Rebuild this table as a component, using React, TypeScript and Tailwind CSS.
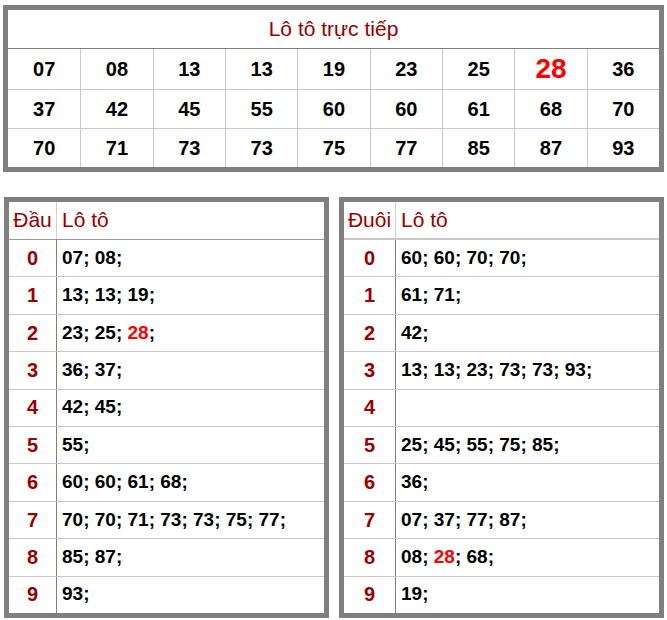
import React from 'react';

// Kết quả lô tô
const numbers = [
  ['07', '08', '13', '13', '19', '23', '25', '28', '36'],
  ['37', '42', '45', '55', '60', '60', '61', '68', '70'],
  ['70', '71', '73', '73', '75', '77', '85', '87', '93'],
];

const special = '28';

const dau = [
  ['07', '08'],
  ['13', '13', '19'],
  ['23', '25', '28'],
  ['36', '37'],
  ['42', '45'],
  ['55'],
  ['60', '60', '61', '68'],
  ['70', '70', '71', '73', '73', '75', '77'],
  ['85', '87'],
  ['93'],
];

const duoi = [
  ['60', '60', '70', '70'],
  ['61', '71'],
  ['42'],
  ['13', '13', '23', '73', '73', '93'],
  [],
  ['25', '45', '55', '75', '85'],
  ['36'],
  ['07', '37', '77', '87'],
  ['08', '28', '68'],
  ['19'],
];

const rowHeights = ['h-[40px]', 'h-[39px]', 'h-[39px]'];

const LotoList = ({ items }: { items: string[] }) => (
  <span>
    {items.map((n, i) => (
      <React.Fragment key={i}>
        <span className={n === special ? 'text-[#ff0000]' : 'text-black'}>{n}</span>
        {'; '}
      </React.Fragment>
    ))}
  </span>
);

const SideTable = ({ title, data, firstCol, headLine }: { title: string; data: string[][]; firstCol: string; headLine: string }) => (
  <div className="flex-1 h-[421px] border-[5px] border-[#808080] bg-white flex flex-col">
    <div className={`flex h-[38px] shrink-0 ${headLine}`}>
      <div className={`${firstCol} shrink-0 flex items-center justify-center pb-[2px] border-r border-[#d0d0d0] text-[21px] text-[#990000]`}>
        {title}
      </div>
      <div className="flex-1 flex items-center pl-[5px] pb-[2px] text-[21px] text-[#990000]">Lô tô</div>
    </div>
    {data.map((items, i) => (
      <div key={i} className={`flex flex-1 ${i > 0 ? 'border-t border-[#c8c8c8]' : ''}`}>
        <div className={`${firstCol} shrink-0 flex items-center justify-center pb-[1px] border-r border-[#808080] text-[20px] font-bold text-[#990000]`}>
          {i}
        </div>
        <div className="flex-1 flex items-center pl-[5px] pb-[2px] text-[19px] font-bold whitespace-nowrap">
          <LotoList items={items} />
        </div>
      </div>
    ))}
  </div>
);

export default function App() {
  return (
    <div className="w-[667px] bg-white px-[3px] pt-[5px] pb-[3px] font-['Liberation_Sans',Arial,sans-serif] leading-none">
      {/* Lô tô trực tiếp */}
      <div className="border-[5px] border-[#808080] bg-white">
        <div className="h-[39px] flex items-center justify-center pb-[2px] border-b border-[#808080] text-[21px] text-[#990000]">
          Lô tô trực tiếp
        </div>
        {numbers.map((row, r) => (
          <div key={r} className={`grid grid-cols-9 ${rowHeights[r]} ${r > 0 ? 'border-t border-[#c8c8c8]' : ''}`}>
            {row.map((n, c) => (
              <div
                key={c}
                className={`flex items-center justify-center pb-[1px] font-bold ${c > 0 ? 'border-l border-[#c8c8c8]' : ''} ${
                  n === special && r === 0 ? 'text-[28px] text-[#ff0000]' : 'text-[20px] text-black'
                }`}
              >
                {n}
              </div>
            ))}
          </div>
        ))}
      </div>

      <div className="mt-[25px] flex gap-[10px] pl-[1px]">
        <SideTable title="Đầu" data={dau} firstCol="w-[48px]" headLine="border-b border-[#999999]" />
        <SideTable title="Đuôi" data={duoi} firstCol="w-[52px]" headLine="border-b-2 border-[#c8c8c8]" />
      </div>
    </div>
  );
}
